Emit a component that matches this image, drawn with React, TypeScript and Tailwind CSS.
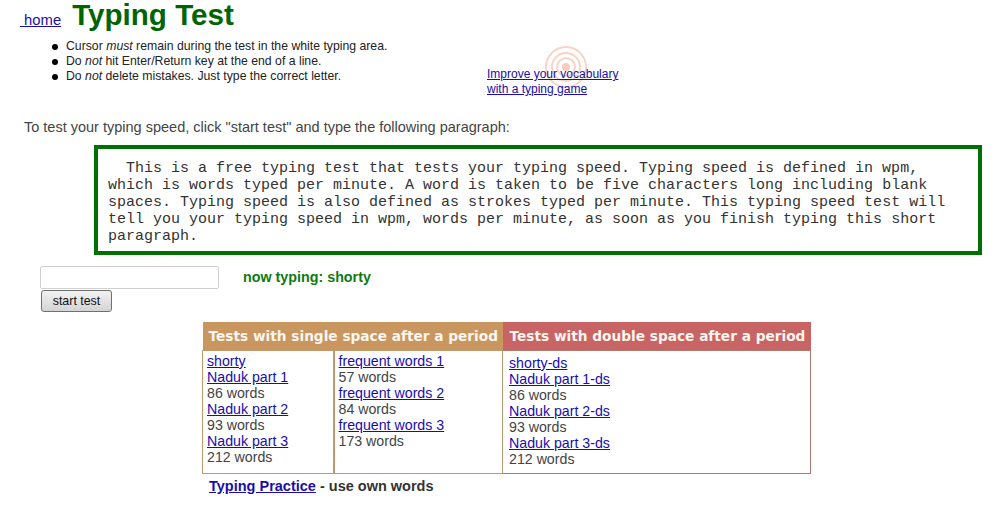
export default function App() {
  const link = "text-[#1a0dab] underline";
  const row = "block leading-4";
  return (
    <div className="w-[1007px] h-[509px] overflow-hidden bg-white font-['Liberation_Sans',Arial,sans-serif] text-[#444]">
      <header className="flex items-end pl-5 h-[30px]">
        <a className="text-[14.8px] leading-4 mb-[2px] text-[#1a0dab] underline whitespace-pre" href="#"> home</a>
        <h1 className="ml-[11px] text-[29.6px] leading-[30px] font-bold text-[#006400]">Typing Test</h1>
      </header>
      <div className="flex mt-[9px]">
        <ul className="ml-[52px] w-[435px] text-[12.25px] leading-[15px] text-[#222] list-none">
          <li className="flex items-center gap-[8px]"><Dot /><span>Cursor <i>must</i> remain during the test in the white typing area.</span></li>
          <li className="flex items-center gap-[8px]"><Dot /><span>Do <i>not</i> hit Enter/Return key at the end of a line.</span></li>
          <li className="flex items-center gap-[8px]"><Dot /><span>Do <i>not</i> delete mistakes. Just type the correct letter.</span></li>
        </ul>
        <div className="relative mt-[28px] text-[12px] leading-[15px]">
          <svg className="absolute left-[56px] top-[-23px]" width="46" height="46" viewBox="0 0 46 46" fill="none">
            <circle cx="23" cy="23" r="4" fill="#f9cdbd" />
            <circle cx="23" cy="23" r="9" stroke="#f9d3c5" strokeWidth="2" />
            <circle cx="23" cy="23" r="14" stroke="#f9d3c5" strokeWidth="2" />
            <circle cx="23" cy="23" r="20" stroke="#f9d3c5" strokeWidth="2" />
          </svg>
          <a className={`relative block ${link}`} href="#">Improve your vocabulary</a>
          <a className={`relative block ${link}`} href="#">with a typing game</a>
        </div>
      </div>
      <p className="ml-6 mt-[22px] text-[14.5px] leading-4">To test your typing speed, click "start test" and type the following paragraph:</p>
      <div className="ml-[94px] mt-[10px] w-[888px] h-[110px] border-4 border-[#007000] pl-[10px] pr-[26px] pt-[11px] font-['Liberation_Mono',monospace] text-[15px] leading-[17.1px] text-[#333]">
        <p className="indent-[18px]">This is a free typing test that tests your typing speed. Typing speed is defined in wpm, which is words typed per minute. A word is taken to be five characters long including blank spaces. Typing speed is also defined as strokes typed per minute. This typing speed test will tell you your typing speed in wpm, words per minute, as soon as you finish typing this short paragraph.</p>
      </div>
      <div className="ml-10 mt-[11px] flex items-center">
        <div className="w-[179px] h-[23px] border border-[#d0d0d0] rounded-[2px] bg-white" />
        <span className="ml-[24px] text-[14.3px] font-bold text-[#107a10]">now typing: shorty</span>
      </div>
      <button className="ml-[41px] mt-[1px] block w-[71px] h-[22px] rounded-[3px] border border-[#707070] bg-gradient-to-b from-[#f2f2f2] to-[#d4d4d4] text-[12.4px] leading-[18px] text-[#111]">start test</button>
      <table className="ml-[202px] mt-[10px] w-[608px] h-[152px] border-collapse text-[14.2px] leading-4 text-[#444] table-fixed">
        <colgroup>
          <col className="w-[131px]" />
          <col className="w-[169px]" />
          <col className="w-[308px]" />
        </colgroup>
        <thead>
          <tr className="h-[28px] font-['DejaVu_Sans',Verdana,sans-serif] text-[13.7px] font-bold text-[#fbf6ee] whitespace-nowrap">
            <th colSpan={2} className="bg-[#c99660] text-left pl-[6px] font-bold">Tests with single space after a period</th>
            <th className="bg-[#c86464] text-left pl-[7px] font-bold">Tests with double space after a period</th>
          </tr>
        </thead>
        <tbody>
          <tr>
            <td className="align-top border border-[#c09a6e] border-r-2 pl-[4px] pt-[2px]">
              <a className={`${row} ${link}`} href="#">shorty</a>
              <a className={`${row} ${link}`} href="#">Naduk part 1</a>
              <span className={row}>86 words</span>
              <a className={`${row} ${link}`} href="#">Naduk part 2</a>
              <span className={row}>93 words</span>
              <a className={`${row} ${link}`} href="#">Naduk part 3</a>
              <span className={row}>212 words</span>
            </td>
            <td className="align-top border border-[#c09a6e] pl-[4px] pt-[2px]">
              <a className={`${row} ${link}`} href="#">frequent words 1</a>
              <span className={row}>57 words</span>
              <a className={`${row} ${link}`} href="#">frequent words 2</a>
              <span className={row}>84 words</span>
              <a className={`${row} ${link}`} href="#">frequent words 3</a>
              <span className={row}>173 words</span>
            </td>
            <td className="align-top border border-[#b07a70] pl-[6px] pt-[4px]">
              <a className={`${row} ${link}`} href="#">shorty-ds</a>
              <a className={`${row} ${link}`} href="#">Naduk part 1-ds</a>
              <span className={row}>86 words</span>
              <a className={`${row} ${link}`} href="#">Naduk part 2-ds</a>
              <span className={row}>93 words</span>
              <a className={`${row} ${link}`} href="#">Naduk part 3-ds</a>
              <span className={row}>212 words</span>
            </td>
          </tr>
        </tbody>
      </table>
      <p className="ml-[209px] mt-[4px] text-[14.5px] leading-4 font-bold text-[#333]">
        <a className="text-[#1a0dab] underline" href="#">Typing Practice</a> - use own words
      </p>
    </div>
  );
}

function Dot() {
  return <span className="w-[6px] h-[6px] rounded-full bg-black shrink-0" />;
}
